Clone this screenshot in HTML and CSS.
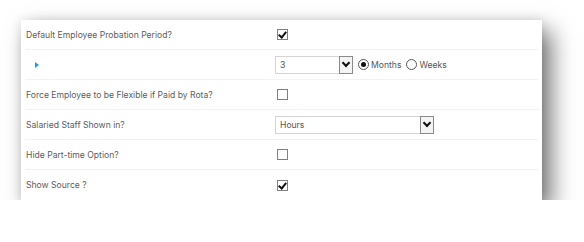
FILE: index.html
```html
<!DOCTYPE html>
<html lang="en">
<head>
  <meta charset="UTF-8">
  <title>Employee Settings</title>
  <link rel="stylesheet" href="styles.css">
</head>
<body>
  <div class="card">
    <div class="row">
      <div class="label">Default Employee Probation Period?</div>
      <div class="field"><span class="check checked"></span></div>
    </div>
    <div class="row">
      <div class="label"><span class="arrow"></span></div>
      <div class="field">
        <div class="select short"><span class="value">3</span><span class="btn"></span></div>
        <span class="radio on"></span><span class="opt">Months</span>
        <span class="radio"></span><span class="opt">Weeks</span>
      </div>
    </div>
    <div class="row">
      <div class="label">Force Employee to be Flexible if Paid by Rota?</div>
      <div class="field"><span class="check"></span></div>
    </div>
    <div class="row">
      <div class="label">Salaried Staff Shown in?</div>
      <div class="field">
        <div class="select wide"><span class="value">Hours</span><span class="btn"></span></div>
      </div>
    </div>
    <div class="row">
      <div class="label">Hide Part-time Option?</div>
      <div class="field"><span class="check"></span></div>
    </div>
    <div class="row last">
      <div class="label">Show Source ?</div>
      <div class="field"><span class="check checked"></span></div>
    </div>
  </div>
</body>
</html>
```
FILE: styles.css
```css
body {
  margin: 0;
  background: #fff;
  font-family: Inter, "Liberation Sans", sans-serif;
  font-size: 8.6px;
  color: #5c5c5c;
}
.card {
  margin: 20px 0 0 21px;
  width: 513px;
  padding: 0 4px;
  background: #fff;
  box-shadow: 0 0 10px rgba(0, 0, 0, 0.1), 9px 11px 22px rgba(0, 0, 0, 0.55);
}
.row {
  display: flex;
  align-items: center;
  height: 29px;
  border-bottom: 1px solid #f2f2f2;
}
.row.last {
  border-bottom: none;
  height: 30px;
}
.label {
  width: 249px;
  padding-left: 1px;
}
.field {
  display: flex;
  align-items: center;
}
.check {
  width: 9px;
  height: 9px;
  border: 1px solid #808080;
  margin-left: 2px;
  position: relative;
  background: #fff;
}
.check.checked::after {
  content: "";
  position: absolute;
  left: 2px;
  top: 0px;
  width: 3px;
  height: 6px;
  border: solid #111;
  border-width: 0 2px 2px 0;
  transform: rotate(40deg);
}
.arrow {
  display: inline-block;
  margin-left: 9px;
  width: 0;
  height: 0;
  border-top: 3px solid transparent;
  border-bottom: 3px solid transparent;
  border-left: 4px solid #1a9fd8;
}
.select {
  display: flex;
  height: 18px;
  border: 1px solid #d4d4d4;
  box-sizing: border-box;
  background: #fff;
}
.select.short {
  width: 78px;
}
.select.wide {
  width: 159px;
}
.value {
  flex-grow: 1;
  padding-left: 4px;
  line-height: 16px;
  color: #555;
}
.btn {
  width: 12px;
  background: #f4f4f4;
  position: relative;
  margin: -1px -1px -1px 0;
  border: 1px solid #8a8a8a;
}
.btn::after {
  content: "";
  position: absolute;
  left: 3px;
  top: 3px;
  width: 4px;
  height: 4px;
  border: solid #111;
  border-width: 0 2px 2px 0;
  transform: rotate(45deg);
}
.radio {
  width: 9px;
  height: 9px;
  border: 1px solid #555;
  border-radius: 50%;
  margin-left: 5px;
  position: relative;
}
.radio.on::after {
  content: "";
  position: absolute;
  left: 2px;
  top: 2px;
  width: 5px;
  height: 5px;
  border-radius: 50%;
  background: #111;
}
.opt {
  margin-left: 2px;
  color: #555;
}
```
